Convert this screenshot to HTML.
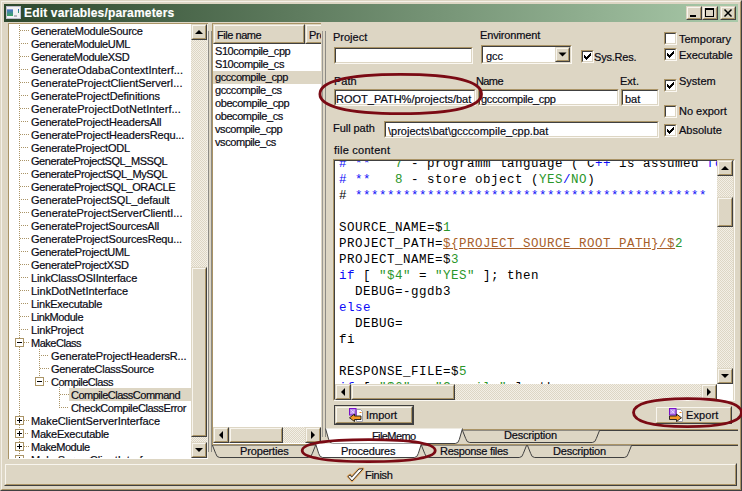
<!DOCTYPE html>
<html><head><meta charset="utf-8"><style>
*{margin:0;padding:0;box-sizing:border-box}
html,body{width:742px;height:491px;overflow:hidden;background:#ddd6c4}
body{position:relative;font-family:"Liberation Sans",sans-serif;font-size:11px;color:#000}
.a{position:absolute}
.t{position:absolute;white-space:pre;line-height:13px;letter-spacing:0;color:#0a0a14;-webkit-text-stroke:0.2px #0a0a14}
.sunk{position:absolute;background:#fff;border:1px solid;border-color:#aa9466 #fbf8f2 #fbf8f2 #aa9466;}
.sunk>.in{position:absolute;left:0;top:0;right:0;bottom:0;border:1px solid;border-color:#404040 #ddd6c4 #ddd6c4 #404040}
.btn{position:absolute;background:#ddd6c4;border:1px solid;border-color:#ddd6c4 #404040 #404040 #ddd6c4}
.btn>.in{position:absolute;left:0;top:0;right:0;bottom:0;border:1px solid;border-color:#f8f5ee #aa9466 #aa9466 #f8f5ee}
.track{position:absolute;background-color:#f3efe6;background-image:linear-gradient(45deg,#ddd6c4 25%,transparent 25%,transparent 75%,#ddd6c4 75%),linear-gradient(45deg,#ddd6c4 25%,transparent 25%,transparent 75%,#ddd6c4 75%);background-size:2px 2px;background-position:0 0,1px 1px}
.cb{position:absolute;width:13px;height:13px;background:#fff;border:1px solid;border-color:#aa9466 #fbf8f2 #fbf8f2 #aa9466}
.cb>.in{position:absolute;left:0;top:0;right:0;bottom:0;border:1px solid;border-color:#404040 #ddd6c4 #ddd6c4 #404040}
.code{position:absolute;white-space:pre;font-family:"Liberation Mono",monospace;font-size:12.5px;letter-spacing:0.5px;line-height:16px;color:#000}
.kw{color:#0a0af8}.num{color:#2a962a}.var{color:#a8602a;text-decoration:underline}
</style></head><body>

<div class="a" style="left:0;top:0;width:742px;height:491px;border:1px solid;border-color:#ddd6c4 #404040 #404040 #ddd6c4"></div>
<div class="a" style="left:1px;top:1px;width:740px;height:489px;border:1px solid;border-color:#f4f0e8 #aa9466 #aa9466 #f4f0e8"></div>
<div class="a" style="left:4px;top:4px;width:734px;height:18px;background:linear-gradient(90deg,#2d482d 0%,#a9c9a9 100%)"></div>
<div class="a" style="left:6px;top:6px;width:15px;height:13px;background:#f2f2f4;border:1px solid #c0c0cc"></div>
<div class="a" style="left:7px;top:9px;width:6px;height:7px;background:linear-gradient(180deg,#4a78c0,#3aa860);border-top:1px solid #8aa0d8"></div>
<div class="a" style="left:18px;top:9px;width:1px;height:4px;background:linear-gradient(180deg,#2a5ac8,#3aa860)"></div>
<div class="a" style="left:14px;top:15px;width:3px;height:2px;background:#b8b8c0"></div>
<div class="t" style="left:24px;top:5px;line-height:16px;color:#fff;-webkit-text-stroke:0.15px #fff;font-weight:bold;font-size:12px;letter-spacing:0.17px">Edit variables/parameters</div>
<div class="btn" style="left:686px;top:6px;width:16px;height:14px;"><div class="in"></div></div>
<div class="btn" style="left:702px;top:6px;width:16px;height:14px;"><div class="in"></div></div>
<div class="btn" style="left:720px;top:6px;width:16px;height:14px;"><div class="in"></div></div>
<div class="a" style="left:690px;top:15px;width:6px;height:2px;background:#000"></div>
<div class="a" style="left:705px;top:8px;width:9px;height:9px;border:1px solid #000;border-top-width:2px"></div>
<svg class="a" style="left:720px;top:6px" width="16" height="14"><path d="M4.5 3.5 L11.5 10.5 M11.5 3.5 L4.5 10.5" stroke="#000" stroke-width="1.5"/></svg>
<div class="a" style="left:8px;top:23px;width:200px;height:436px;background:#fff;border-left:1px solid #aa9466;border-top:1px solid #aa9466"></div>
<div class="a" style="left:9px;top:24px;width:182px;height:434px;overflow:hidden">
<div class="a" style="left:10px;top:1px;width:1px;height:435px;background:repeating-linear-gradient(180deg,#aa9466 0 1px,transparent 1px 2px)"></div>
<div class="a" style="left:11px;top:6px;width:9px;height:1px;background:repeating-linear-gradient(90deg,#aa9466 0 1px,transparent 1px 2px)"></div>
<div class="t" style="left:22px;top:1px;letter-spacing:-0.255px">GenerateModuleSource</div>
<div class="a" style="left:12px;top:19px;width:8px;height:1px;background:repeating-linear-gradient(90deg,#aa9466 0 1px,transparent 1px 2px)"></div>
<div class="t" style="left:22px;top:14px;letter-spacing:-0.363px">GenerateModuleUML</div>
<div class="a" style="left:11px;top:32px;width:9px;height:1px;background:repeating-linear-gradient(90deg,#aa9466 0 1px,transparent 1px 2px)"></div>
<div class="t" style="left:22px;top:27px;letter-spacing:-0.374px">GenerateModuleXSD</div>
<div class="a" style="left:12px;top:45px;width:8px;height:1px;background:repeating-linear-gradient(90deg,#aa9466 0 1px,transparent 1px 2px)"></div>
<div class="t" style="left:22px;top:40px;letter-spacing:0.033px">GenerateOdabaContextInterf...</div>
<div class="a" style="left:11px;top:58px;width:9px;height:1px;background:repeating-linear-gradient(90deg,#aa9466 0 1px,transparent 1px 2px)"></div>
<div class="t" style="left:22px;top:53px;letter-spacing:-0.047px">GenerateProjectClientServerI...</div>
<div class="a" style="left:12px;top:71px;width:8px;height:1px;background:repeating-linear-gradient(90deg,#aa9466 0 1px,transparent 1px 2px)"></div>
<div class="t" style="left:22px;top:66px;letter-spacing:-0.095px">GenerateProjectDefinitions</div>
<div class="a" style="left:11px;top:84px;width:9px;height:1px;background:repeating-linear-gradient(90deg,#aa9466 0 1px,transparent 1px 2px)"></div>
<div class="t" style="left:22px;top:79px;letter-spacing:0.041px">GenerateProjectDotNetInterf...</div>
<div class="a" style="left:12px;top:97px;width:8px;height:1px;background:repeating-linear-gradient(90deg,#aa9466 0 1px,transparent 1px 2px)"></div>
<div class="t" style="left:22px;top:92px;letter-spacing:-0.144px">GenerateProjectHeadersAll</div>
<div class="a" style="left:11px;top:110px;width:9px;height:1px;background:repeating-linear-gradient(90deg,#aa9466 0 1px,transparent 1px 2px)"></div>
<div class="t" style="left:22px;top:105px;letter-spacing:-0.136px">GenerateProjectHeadersRequ...</div>
<div class="a" style="left:12px;top:123px;width:8px;height:1px;background:repeating-linear-gradient(90deg,#aa9466 0 1px,transparent 1px 2px)"></div>
<div class="t" style="left:22px;top:118px;letter-spacing:-0.212px">GenerateProjectODL</div>
<div class="a" style="left:11px;top:136px;width:9px;height:1px;background:repeating-linear-gradient(90deg,#aa9466 0 1px,transparent 1px 2px)"></div>
<div class="t" style="left:22px;top:131px;letter-spacing:-0.435px">GenerateProjectSQL_MSSQL</div>
<div class="a" style="left:12px;top:149px;width:8px;height:1px;background:repeating-linear-gradient(90deg,#aa9466 0 1px,transparent 1px 2px)"></div>
<div class="t" style="left:22px;top:144px;letter-spacing:-0.359px">GenerateProjectSQL_MySQL</div>
<div class="a" style="left:11px;top:162px;width:9px;height:1px;background:repeating-linear-gradient(90deg,#aa9466 0 1px,transparent 1px 2px)"></div>
<div class="t" style="left:22px;top:157px;letter-spacing:-0.371px">GenerateProjectSQL_ORACLE</div>
<div class="a" style="left:12px;top:175px;width:8px;height:1px;background:repeating-linear-gradient(90deg,#aa9466 0 1px,transparent 1px 2px)"></div>
<div class="t" style="left:22px;top:170px;letter-spacing:-0.103px">GenerateProjectSQL_default</div>
<div class="a" style="left:11px;top:188px;width:9px;height:1px;background:repeating-linear-gradient(90deg,#aa9466 0 1px,transparent 1px 2px)"></div>
<div class="t" style="left:22px;top:183px;letter-spacing:-0.047px">GenerateProjectServerClientI...</div>
<div class="a" style="left:12px;top:201px;width:8px;height:1px;background:repeating-linear-gradient(90deg,#aa9466 0 1px,transparent 1px 2px)"></div>
<div class="t" style="left:22px;top:196px;letter-spacing:-0.188px">GenerateProjectSourcesAll</div>
<div class="a" style="left:11px;top:214px;width:9px;height:1px;background:repeating-linear-gradient(90deg,#aa9466 0 1px,transparent 1px 2px)"></div>
<div class="t" style="left:22px;top:209px;letter-spacing:-0.173px">GenerateProjectSourcesRequ...</div>
<div class="a" style="left:12px;top:227px;width:8px;height:1px;background:repeating-linear-gradient(90deg,#aa9466 0 1px,transparent 1px 2px)"></div>
<div class="t" style="left:22px;top:222px;letter-spacing:-0.257px">GenerateProjectUML</div>
<div class="a" style="left:11px;top:240px;width:9px;height:1px;background:repeating-linear-gradient(90deg,#aa9466 0 1px,transparent 1px 2px)"></div>
<div class="t" style="left:22px;top:235px;letter-spacing:-0.284px">GenerateProjectXSD</div>
<div class="a" style="left:12px;top:253px;width:8px;height:1px;background:repeating-linear-gradient(90deg,#aa9466 0 1px,transparent 1px 2px)"></div>
<div class="t" style="left:22px;top:248px;letter-spacing:-0.159px">LinkClassOSIInterface</div>
<div class="a" style="left:11px;top:266px;width:9px;height:1px;background:repeating-linear-gradient(90deg,#aa9466 0 1px,transparent 1px 2px)"></div>
<div class="t" style="left:22px;top:261px;letter-spacing:-0.001px">LinkDotNetInterface</div>
<div class="a" style="left:12px;top:279px;width:8px;height:1px;background:repeating-linear-gradient(90deg,#aa9466 0 1px,transparent 1px 2px)"></div>
<div class="t" style="left:22px;top:274px;letter-spacing:-0.244px">LinkExecutable</div>
<div class="a" style="left:11px;top:292px;width:9px;height:1px;background:repeating-linear-gradient(90deg,#aa9466 0 1px,transparent 1px 2px)"></div>
<div class="t" style="left:22px;top:287px;letter-spacing:-0.417px">LinkModule</div>
<div class="a" style="left:12px;top:305px;width:8px;height:1px;background:repeating-linear-gradient(90deg,#aa9466 0 1px,transparent 1px 2px)"></div>
<div class="t" style="left:22px;top:300px;letter-spacing:-0.184px">LinkProject</div>
<div class="a" style="left:15px;top:318px;width:5px;height:1px;background:repeating-linear-gradient(90deg,#aa9466 0 1px,transparent 1px 2px)"></div>
<div class="a" style="left:6px;top:314px;width:9px;height:9px;border:1px solid #aa9466;background:#fff"></div>
<div class="a" style="left:8px;top:318px;width:5px;height:1px;background:#000"></div>
<div class="t" style="left:22px;top:313px;letter-spacing:-0.478px">MakeClass</div>
<div class="a" style="left:32px;top:331px;width:8px;height:1px;background:repeating-linear-gradient(90deg,#aa9466 0 1px,transparent 1px 2px)"></div>
<div class="t" style="left:42px;top:326px;letter-spacing:-0.131px">GenerateProjectHeadersR...</div>
<div class="a" style="left:31px;top:344px;width:9px;height:1px;background:repeating-linear-gradient(90deg,#aa9466 0 1px,transparent 1px 2px)"></div>
<div class="t" style="left:42px;top:339px;letter-spacing:-0.281px">GenerateClassSource</div>
<div class="a" style="left:36px;top:357px;width:4px;height:1px;background:repeating-linear-gradient(90deg,#aa9466 0 1px,transparent 1px 2px)"></div>
<div class="a" style="left:26px;top:353px;width:9px;height:9px;border:1px solid #aa9466;background:#fff"></div>
<div class="a" style="left:28px;top:357px;width:5px;height:1px;background:#000"></div>
<div class="t" style="left:42px;top:352px;letter-spacing:-0.497px">CompileClass</div>
<div class="a" style="left:60px;top:364px;width:122px;height:13px;background:#ddd6c4"></div>
<div class="a" style="left:51px;top:370px;width:9px;height:1px;background:repeating-linear-gradient(90deg,#aa9466 0 1px,transparent 1px 2px)"></div>
<div class="t" style="left:62px;top:365px;letter-spacing:-0.5px">CompileClassCommand</div>
<div class="a" style="left:52px;top:383px;width:8px;height:1px;background:repeating-linear-gradient(90deg,#aa9466 0 1px,transparent 1px 2px)"></div>
<div class="t" style="left:62px;top:378px;letter-spacing:-0.386px">CheckCompileClassError</div>
<div class="a" style="left:15px;top:396px;width:5px;height:1px;background:repeating-linear-gradient(90deg,#aa9466 0 1px,transparent 1px 2px)"></div>
<div class="a" style="left:6px;top:392px;width:9px;height:9px;border:1px solid #aa9466;background:#fff"></div>
<div class="a" style="left:8px;top:396px;width:5px;height:1px;background:#000"></div>
<div class="a" style="left:10px;top:394px;width:1px;height:5px;background:#000"></div>
<div class="t" style="left:22px;top:391px;letter-spacing:-0.049px">MakeClientServerInterface</div>
<div class="a" style="left:16px;top:409px;width:4px;height:1px;background:repeating-linear-gradient(90deg,#aa9466 0 1px,transparent 1px 2px)"></div>
<div class="a" style="left:6px;top:405px;width:9px;height:9px;border:1px solid #aa9466;background:#fff"></div>
<div class="a" style="left:8px;top:409px;width:5px;height:1px;background:#000"></div>
<div class="a" style="left:10px;top:407px;width:1px;height:5px;background:#000"></div>
<div class="t" style="left:22px;top:404px;letter-spacing:-0.238px">MakeExecutable</div>
<div class="a" style="left:15px;top:422px;width:5px;height:1px;background:repeating-linear-gradient(90deg,#aa9466 0 1px,transparent 1px 2px)"></div>
<div class="a" style="left:6px;top:418px;width:9px;height:9px;border:1px solid #aa9466;background:#fff"></div>
<div class="a" style="left:8px;top:422px;width:5px;height:1px;background:#000"></div>
<div class="a" style="left:10px;top:420px;width:1px;height:5px;background:#000"></div>
<div class="t" style="left:22px;top:417px;letter-spacing:-0.428px">MakeModule</div>
<div class="a" style="left:16px;top:435px;width:4px;height:1px;background:repeating-linear-gradient(90deg,#aa9466 0 1px,transparent 1px 2px)"></div>
<div class="a" style="left:6px;top:431px;width:9px;height:9px;border:1px solid #aa9466;background:#fff"></div>
<div class="a" style="left:8px;top:435px;width:5px;height:1px;background:#000"></div>
<div class="a" style="left:10px;top:433px;width:1px;height:5px;background:#000"></div>
<div class="t" style="left:22px;top:430px;letter-spacing:-0.049px">MakeServerClientInterface</div>
<div class="a" style="left:30px;top:325px;width:1px;height:28px;background:repeating-linear-gradient(180deg,#aa9466 0 1px,transparent 1px 2px)"></div>
<div class="a" style="left:50px;top:363px;width:1px;height:21px;background:repeating-linear-gradient(180deg,#aa9466 0 1px,transparent 1px 2px)"></div>
</div>
<div class="a" style="left:207px;top:24px;width:1px;height:434px;background:#f0ece2"></div>
<div class="track" style="left:191px;top:24px;width:16px;height:434px"></div>
<div class="btn" style="left:191px;top:24px;width:16px;height:16px;"><div class="in"></div></div>
<svg class="a" style="left:191px;top:24px" width="16" height="16"><path d="M4.0 10.0 L12.0 10.0 L8.0 6.0 Z" fill="#000"/></svg>
<div class="btn" style="left:191px;top:267px;width:16px;height:170px;"><div class="in"></div></div>
<div class="btn" style="left:191px;top:442px;width:16px;height:16px;"><div class="in"></div></div>
<svg class="a" style="left:191px;top:442px" width="16" height="16"><path d="M4.0 6.0 L12.0 6.0 L8.0 10.0 Z" fill="#000"/></svg>
<div class="a" style="left:208px;top:31px;width:1px;height:421px;background:#8c8a84"></div>
<div class="a" style="left:211px;top:31px;width:1px;height:421px;background:#8c8a84"></div>
<div class="a" style="left:212px;top:23px;width:109px;height:421px;background:#fff;border-left:1px solid #aa9466;border-top:1px solid #aa9466"></div>
<div class="a" style="left:213px;top:24px;width:108px;height:403px;overflow:hidden">
<div class="btn" style="left:0px;top:0px;width:92px;height:20px;"><div class="in"></div></div>
<div class="btn" style="left:92px;top:0px;width:40px;height:20px;"><div class="in"></div></div>
<div class="t" style="left:4px;top:5px;letter-spacing:-0.45px">File name</div>
<div class="t" style="left:96px;top:5px;letter-spacing:-0.3px">Procedure</div>
<div class="t" style="left:2px;top:21px;letter-spacing:-0.43px">S10compile_cpp</div>
<div class="t" style="left:2px;top:34px;letter-spacing:-0.43px">S10compile_cs</div>
<div class="a" style="left:0;top:47px;width:108px;height:13px;background:#ddd6c4"></div>
<div class="t" style="left:2px;top:47px;letter-spacing:-0.43px">gcccompile_cpp</div>
<div class="t" style="left:2px;top:60px;letter-spacing:-0.43px">gcccompile_cs</div>
<div class="t" style="left:2px;top:73px;letter-spacing:-0.43px">obecompile_cpp</div>
<div class="t" style="left:2px;top:86px;letter-spacing:-0.43px">obecompile_cs</div>
<div class="t" style="left:2px;top:99px;letter-spacing:-0.43px">vscompile_cpp</div>
<div class="t" style="left:2px;top:112px;letter-spacing:-0.43px">vscompile_cs</div>
</div>
<div class="track" style="left:213px;top:427px;width:108px;height:16px"></div>
<div class="btn" style="left:213px;top:427px;width:16px;height:16px;"><div class="in"></div></div>
<svg class="a" style="left:213px;top:427px" width="16" height="16"><path d="M10.0 4.0 L10.0 12.0 L6.0 8.0 Z" fill="#000"/></svg>
<div class="btn" style="left:229px;top:427px;width:54px;height:16px;"><div class="in"></div></div>
<div class="btn" style="left:305px;top:427px;width:16px;height:16px;"><div class="in"></div></div>
<svg class="a" style="left:305px;top:427px" width="16" height="16"><path d="M6.0 4.0 L6.0 12.0 L10.0 8.0 Z" fill="#000"/></svg>
<div class="a" style="left:322px;top:31px;width:1px;height:406px;background:#9c9a94"></div>
<div class="a" style="left:325px;top:31px;width:1px;height:406px;background:#8c8a84"></div>
<div class="t" style="left:333px;top:31px;">Project</div>
<div class="sunk" style="left:334px;top:47px;width:139px;height:17px"><div class="in"></div><div class="t" style="left:3px;top:3px;overflow:hidden;right:2px"></div></div>
<div class="t" style="left:480px;top:29px;letter-spacing:-0.15px">Environment</div>
<div class="sunk" style="left:481px;top:45px;width:91px;height:19px"><div class="in"></div><div class="t" style="left:4px;top:4px">gcc</div></div>
<div class="btn" style="left:555px;top:47px;width:15px;height:15px;"><div class="in"></div></div>
<svg class="a" style="left:555px;top:47px" width="15" height="15"><path d="M3.5 5.5 L11.5 5.5 L7.5 9.5 Z" fill="#000"/></svg>
<div class="cb" style="left:581px;top:50px"><div class="in"></div></div>
<svg class="a" style="left:581px;top:50px" width="13" height="13" shape-rendering="crispEdges"><path d="M9 3h1v1h-1zM8 4h1v1h-1zM9 4h1v1h-1zM3 5h1v1h-1zM7 5h1v1h-1zM8 5h1v1h-1zM9 5h1v1h-1zM3 6h1v1h-1zM4 6h1v1h-1zM6 6h1v1h-1zM7 6h1v1h-1zM8 6h1v1h-1zM3 7h1v1h-1zM4 7h1v1h-1zM5 7h1v1h-1zM6 7h1v1h-1zM7 7h1v1h-1zM4 8h1v1h-1zM5 8h1v1h-1zM6 8h1v1h-1zM5 9h1v1h-1z" fill="#000"/></svg>
<div class="t" style="left:594px;top:51px;letter-spacing:-0.2px">Sys.Res.</div>
<div class="cb" style="left:664px;top:32px"><div class="in"></div></div>
<div class="t" style="left:679px;top:33px;">Temporary</div>
<div class="cb" style="left:664px;top:48px"><div class="in"></div></div>
<svg class="a" style="left:664px;top:48px" width="13" height="13" shape-rendering="crispEdges"><path d="M9 3h1v1h-1zM8 4h1v1h-1zM9 4h1v1h-1zM3 5h1v1h-1zM7 5h1v1h-1zM8 5h1v1h-1zM9 5h1v1h-1zM3 6h1v1h-1zM4 6h1v1h-1zM6 6h1v1h-1zM7 6h1v1h-1zM8 6h1v1h-1zM3 7h1v1h-1zM4 7h1v1h-1zM5 7h1v1h-1zM6 7h1v1h-1zM7 7h1v1h-1zM4 8h1v1h-1zM5 8h1v1h-1zM6 8h1v1h-1zM5 9h1v1h-1z" fill="#000"/></svg>
<div class="t" style="left:679px;top:49px;letter-spacing:-0.1px">Executable</div>
<div class="t" style="left:334px;top:75px;">Path</div>
<div class="sunk" style="left:334px;top:89px;width:142px;height:17px"><div class="in"></div><div class="t" style="left:1px;top:3px;overflow:hidden;right:2px">ROOT_PATH%/projects/bat</div></div>
<div class="t" style="left:476px;top:75px;letter-spacing:-0.6px">Name</div>
<div class="sunk" style="left:478px;top:89px;width:141px;height:17px"><div class="in"></div><div class="t" style="left:2px;top:3px;overflow:hidden;right:2px"><span style="letter-spacing:-0.3px">gcccompile_cpp</span></div></div>
<div class="t" style="left:620px;top:75px;">Ext.</div>
<div class="sunk" style="left:621px;top:89px;width:38px;height:17px"><div class="in"></div><div class="t" style="left:3px;top:3px;overflow:hidden;right:2px">bat</div></div>
<div class="cb" style="left:664px;top:79px"><div class="in"></div></div>
<svg class="a" style="left:664px;top:79px" width="13" height="13" shape-rendering="crispEdges"><path d="M9 3h1v1h-1zM8 4h1v1h-1zM9 4h1v1h-1zM3 5h1v1h-1zM7 5h1v1h-1zM8 5h1v1h-1zM9 5h1v1h-1zM3 6h1v1h-1zM4 6h1v1h-1zM6 6h1v1h-1zM7 6h1v1h-1zM8 6h1v1h-1zM3 7h1v1h-1zM4 7h1v1h-1zM5 7h1v1h-1zM6 7h1v1h-1zM7 7h1v1h-1zM4 8h1v1h-1zM5 8h1v1h-1zM6 8h1v1h-1zM5 9h1v1h-1z" fill="#000"/></svg>
<div class="t" style="left:679px;top:75px;">System</div>
<div class="cb" style="left:664px;top:105px"><div class="in"></div></div>
<div class="t" style="left:679px;top:105px;">No export</div>
<div class="t" style="left:333px;top:122px;letter-spacing:-0.05px">Full path</div>
<div class="sunk" style="left:384px;top:121px;width:275px;height:17px"><div class="in"></div><div class="t" style="left:3px;top:3px;overflow:hidden;right:2px">\projects\bat\gcccompile_cpp.bat</div></div>
<div class="cb" style="left:664px;top:124px"><div class="in"></div></div>
<svg class="a" style="left:664px;top:124px" width="13" height="13" shape-rendering="crispEdges"><path d="M9 3h1v1h-1zM8 4h1v1h-1zM9 4h1v1h-1zM3 5h1v1h-1zM7 5h1v1h-1zM8 5h1v1h-1zM9 5h1v1h-1zM3 6h1v1h-1zM4 6h1v1h-1zM6 6h1v1h-1zM7 6h1v1h-1zM8 6h1v1h-1zM3 7h1v1h-1zM4 7h1v1h-1zM5 7h1v1h-1zM6 7h1v1h-1zM7 7h1v1h-1zM4 8h1v1h-1zM5 8h1v1h-1zM6 8h1v1h-1zM5 9h1v1h-1z" fill="#000"/></svg>
<div class="t" style="left:679px;top:124px;">Absolute</div>
<div class="t" style="left:334px;top:144px;letter-spacing:0.25px">file content</div>
<div class="sunk" style="left:333px;top:159px;width:402px;height:242px"><div class="in"></div></div>
<div class="a" style="left:335px;top:161px;width:382px;height:223px;overflow:hidden;background:#fff">
<div class="code" style="left:4px;top:-5px"><span class="kw"># **</span>   <span class="num">7</span> - programm language ( C<span class="kw">++</span> is assumed <span class="kw">for</span></div>
<div class="code" style="left:4px;top:11px"><span class="kw"># **</span>   <span class="num">8</span> - store object (<span class="num">YES</span><span class="kw">/</span><span class="num">NO</span>)</div>
<div class="code" style="left:4px;top:27px"># <span class="kw">********************************************</span></div>
<div class="code" style="left:4px;top:43px"></div>
<div class="code" style="left:4px;top:59px">SOURCE_NAME=$<span class="num">1</span></div>
<div class="code" style="left:4px;top:75px">PROJECT_PATH=<span class="var">${PROJECT_SOURCE_ROOT_PATH}/$</span><span class="num">2</span></div>
<div class="code" style="left:4px;top:91px">PROJECT_NAME=$<span class="num">3</span></div>
<div class="code" style="left:4px;top:107px"><span class="kw">if</span> [ <span class="num">"$4"</span> = <span class="num">"YES"</span> ]; then</div>
<div class="code" style="left:4px;top:123px">  DEBUG=-ggdb3</div>
<div class="code" style="left:4px;top:139px"><span class="kw">else</span></div>
<div class="code" style="left:4px;top:155px">  DEBUG=</div>
<div class="code" style="left:4px;top:171px">fi</div>
<div class="code" style="left:4px;top:187px"></div>
<div class="code" style="left:4px;top:203px">RESPONSE_FILE=$<span class="num">5</span></div>
<div class="code" style="left:4px;top:219px"><span class="kw">if</span> [ <span class="num">"$6"</span> = <span class="num">"Compile"</span> ]; then</div>
</div>
<div class="track" style="left:717px;top:160px;width:16px;height:224px"></div>
<div class="btn" style="left:717px;top:160px;width:16px;height:16px;"><div class="in"></div></div>
<svg class="a" style="left:717px;top:160px" width="16" height="16"><path d="M4.0 10.0 L12.0 10.0 L8.0 6.0 Z" fill="#000"/></svg>
<div class="btn" style="left:717px;top:197px;width:16px;height:30px;"><div class="in"></div></div>
<div class="btn" style="left:717px;top:368px;width:16px;height:16px;"><div class="in"></div></div>
<svg class="a" style="left:717px;top:368px" width="16" height="16"><path d="M4.0 6.0 L12.0 6.0 L8.0 10.0 Z" fill="#000"/></svg>
<div class="track" style="left:335px;top:384px;width:382px;height:16px"></div>
<div class="btn" style="left:335px;top:384px;width:16px;height:16px;"><div class="in"></div></div>
<svg class="a" style="left:335px;top:384px" width="16" height="16"><path d="M10.0 4.0 L10.0 12.0 L6.0 8.0 Z" fill="#000"/></svg>
<div class="btn" style="left:351px;top:384px;width:104px;height:16px;"><div class="in"></div></div>
<div class="btn" style="left:701px;top:384px;width:16px;height:16px;"><div class="in"></div></div>
<svg class="a" style="left:701px;top:384px" width="16" height="16"><path d="M6.0 4.0 L6.0 12.0 L10.0 8.0 Z" fill="#000"/></svg>
<div class="a" style="left:717px;top:384px;width:16px;height:16px;background:#fff"></div>
<div class="a" style="left:334px;top:405px;width:80px;height:20px;border:1px solid #404040"></div>
<div class="btn" style="left:335px;top:406px;width:78px;height:18px;"><div class="in"></div></div>
<svg class="a" style="left:349px;top:408px" width="16" height="16"><path d="M7.5 1.5 h4 l2 2 v10 h-6 z" fill="#fff" stroke="#a0a0ac"/><path d="M10.5 4.5 h2" stroke="#f08a20"/><rect x="0.5" y="0.5" width="6.5" height="6.5" fill="#b890ec" stroke="#7a10c8"/><path d="M2.2 2.2 L5.3 5.3 M5.3 2.2 L2.2 5.3" stroke="#e8dcff" stroke-width="0.9"/><path d="M12 8 H5.5 V6 L0.5 9.8 L5.5 13.5 V11.5 H12 Z" fill="#f29a26" stroke="#1a1a1a" stroke-width="0.9"/></svg>
<div class="t" style="left:366px;top:409px;">Import</div>
<div class="btn" style="left:655px;top:406px;width:77px;height:18px;"><div class="in"></div></div>
<svg class="a" style="left:669px;top:408px" width="16" height="16"><path d="M7.5 1.5 h4 l2 2 v10 h-6 z" fill="#fff" stroke="#a0a0ac"/><path d="M10.5 4.5 h2" stroke="#f08a20"/><rect x="0.5" y="0.5" width="6.5" height="6.5" fill="#b890ec" stroke="#7a10c8"/><path d="M2.2 2.2 L5.3 5.3 M5.3 2.2 L2.2 5.3" stroke="#e8dcff" stroke-width="0.9"/><path d="M0.5 8 H7.5 V6 L12.5 9.8 L7.5 13.5 V11.5 H0.5 Z" fill="#f29a26" stroke="#1a1a1a" stroke-width="0.9"/></svg>
<div class="t" style="left:686px;top:409px;letter-spacing:0.1px">Export</div>
<svg class="a" style="left:0;top:0" width="742" height="491">
<path d="M462 430.5 H738" stroke="#404040" stroke-width="1"/>
<path d="M462 429.5 H738" stroke="#aa9466" stroke-width="1"/>
<path d="M462.5 430.5 L465.7 438.5 Q466.7 442.5 469.7 442.5 L592.3 442.5 Q595.3 442.5 596.3 438.5 L599.5 430.5" fill="#ddd6c4" stroke="#404040" stroke-width="1"/>
<path d="M325.5 428.5 L328.7 439.5 Q329.7 443.5 332.7 443.5 L455.3 443.5 Q458.3 443.5 459.3 439.5 L462.5 428.5 Z" fill="#fff" stroke="none"/>
<path d="M325.5 428.5 L328.7 439.5 Q329.7 443.5 332.7 443.5 L455.3 443.5 Q458.3 443.5 459.3 439.5 L462.5 428.5" fill="none" stroke="#404040" stroke-width="1"/>
<path d="M212 445.5 H738" stroke="#404040" stroke-width="1"/>
<path d="M212 444.5 H738" stroke="#aa9466" stroke-width="1"/>
<path d="M527.5 445.5 L530.7 453.5 Q531.7 457.5 534.7 457.5 L624.3 457.5 Q627.3 457.5 628.3 453.5 L631.5 445.5" fill="#ddd6c4" stroke="#404040" stroke-width="1"/>
<path d="M421.5 445.5 L424.7 453.5 Q425.7 457.5 428.7 457.5 L519.3 457.5 Q522.3 457.5 523.3 453.5 L526.5 445.5" fill="#ddd6c4" stroke="#404040" stroke-width="1"/>
<path d="M212.5 445.5 L215.7 453.5 Q216.7 457.5 219.7 457.5 L308.3 457.5 Q311.3 457.5 312.3 453.5 L315.5 445.5" fill="#ddd6c4" stroke="#404040" stroke-width="1"/>
<path d="M315.5 443.5 L318.7 453.5 Q319.7 457.5 322.7 457.5 L414.3 457.5 Q417.3 457.5 418.3 453.5 L421.5 443.5 Z" fill="#fff" stroke="none"/>
<path d="M315.5 443.5 L318.7 453.5 Q319.7 457.5 322.7 457.5 L414.3 457.5 Q417.3 457.5 418.3 453.5 L421.5 443.5" fill="none" stroke="#404040" stroke-width="1"/>
</svg>
<div class="t" style="left:372px;top:430px;letter-spacing:-0.6px">FileMemo</div>
<div class="t" style="left:504px;top:429px;letter-spacing:-0.2px">Description</div>
<div class="t" style="left:240px;top:445px;letter-spacing:-0.15px">Properties</div>
<div class="t" style="left:341px;top:445px;letter-spacing:-0.2px">Procedures</div>
<div class="t" style="left:440px;top:445px;letter-spacing:-0.3px">Response files</div>
<div class="t" style="left:553px;top:445px;letter-spacing:-0.2px">Description</div>
<div class="btn" style="left:4px;top:463px;width:733px;height:23px;"><div class="in"></div></div>
<svg class="a" style="left:342px;top:464px" width="24" height="22"><path d="M6 12.5 L8.3 10.8 L9.6 13.2 L17 5 L21 4.8 L10 17 Z" fill="#fff" stroke="#f0a040" stroke-width="2.6" stroke-linejoin="round" opacity="0.75"/><path d="M6 12.5 L8.3 10.8 L9.6 13.2 L17 5 L21 4.8 L10 17 Z" fill="#fff" stroke="#202020" stroke-width="0.9" stroke-linejoin="round"/></svg>
<div class="t" style="left:365px;top:469px;letter-spacing:-0.3px">Finish</div>
<svg class="a" style="left:0;top:0" width="742" height="491"><path d="M319.9 94 C319.9 81.25999999999999 348.18 74.4 400.7 74.4 C453.21999999999997 74.4 481.5 81.25999999999999 481.5 94 C481.5 106.74000000000001 453.21999999999997 113.6 400.7 113.6 C348.18 113.6 319.9 106.74000000000001 319.9 94 Z" fill="none" stroke="#7a0a14" stroke-width="2.8"/><path d="M302.2 450.6 C302.2 443.45000000000005 325.47499999999997 439.6 368.7 439.6 C411.925 439.6 435.2 443.45000000000005 435.2 450.6 C435.2 457.75 411.925 461.6 368.7 461.6 C325.47499999999997 461.6 302.2 457.75 302.2 450.6 Z" fill="none" stroke="#7a0a14" stroke-width="2.8"/><path d="M633.5 412.6 C633.5 403.5 652.4 398.6 687.5 398.6 C722.6 398.6 741.5 403.5 741.5 412.6 C741.5 421.70000000000005 722.6 426.6 687.5 426.6 C652.4 426.6 633.5 421.70000000000005 633.5 412.6 Z" fill="none" stroke="#7a0a14" stroke-width="2.8"/></svg>
</body></html>
